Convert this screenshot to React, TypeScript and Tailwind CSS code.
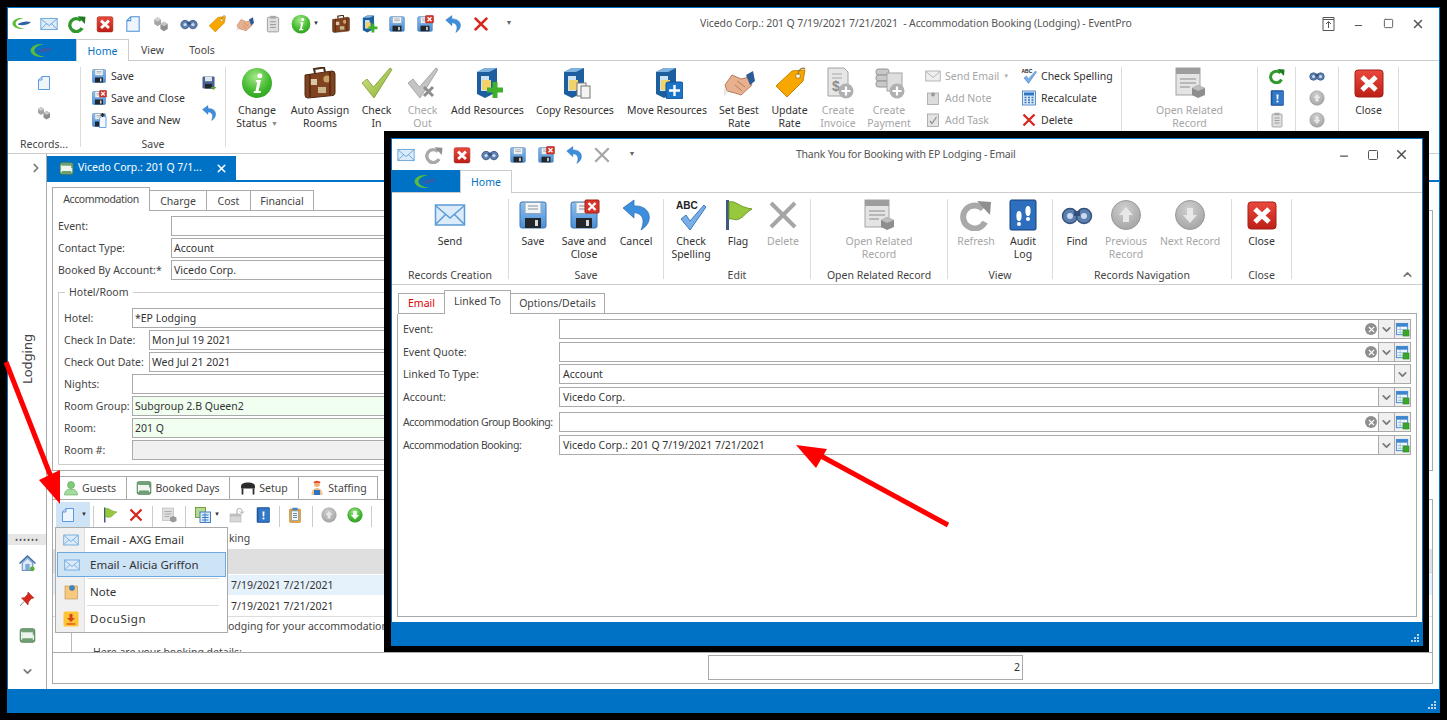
import type { ReactNode } from 'react'
import { ChevronRight, ChevronDown, ChevronUp, X, Minus, Square } from 'lucide-react'

// all icons are drawn on a 32 x 32 box
const saveBase = (
  <>
    <rect x="3" y="3" width="26" height="26" rx="2" fill="url(#blueV)" stroke="#3a75b8" />
    <rect x="8" y="3.5" width="16" height="11" fill="#f3f6f9" stroke="#8fa3b8" />
    <path d="M11 7h10M11 10h10" stroke="#8a8f96" strokeWidth="1.2" />
    <rect x="8" y="19" width="16" height="10" fill="#23272c" />
    <rect x="18" y="21" width="3" height="6" fill="#d9dde2" />
  </>
)

const cabinet = (
  <>
    <path d="M5 5 L13 1 H25 V25 L13 31 L5 27 Z" fill="#1d5f9e" />
    <path d="M5 5 L13 1 H25 L17 5 Z" fill="#7fb2de" />
    <path d="M9 9 H17 V24 H9 Z" fill="#cfe2f3" />
    <path d="M10 13 H19 V23 H10 Z" fill="#f2d26b" />
  </>
)

const icons: Record<string, ReactNode> = {
  mail: (
    <>
      <rect x="1.5" y="6" width="29" height="20" fill="#dcebfa" stroke="#5b9bd5" strokeWidth="1.5" />
      <path d="M2 7 L16 19 L30 7 M2 25 L12 15 M30 25 L20 15" fill="none" stroke="#5b9bd5" strokeWidth="1.5" />
    </>
  ),
  save: saveBase,
  saveClose: (
    <>
      {saveBase}
      <rect x="17" y="1" width="14" height="13" rx="1" fill="#d8352a" stroke="#a3211a" />
      <path d="M20.5 4 L27.5 11 M27.5 4 L20.5 11" stroke="#fff" strokeWidth="2.4" />
    </>
  ),
  saveNew: (
    <>
      {saveBase}
      <path d="M17 13 L21 9 H30 V31 H17 Z" fill="#f2f7fd" stroke="#4a90d9" strokeWidth="1.6" />
      <path d="M23 2 V10 M19 6 H27" stroke="#222" strokeWidth="2.6" />
    </>
  ),
  saveGreen: (
    <>
      <rect x="3" y="3" width="24" height="24" rx="2" fill="#46618f" />
      <rect x="8" y="3.5" width="14" height="9" fill="#dfe5ee" />
      <rect x="8" y="18" width="14" height="9" fill="#20262e" />
      <path d="M19 24 L31 24 L25 30 Z" fill="#5aa82e" />
    </>
  ),
  undo: (
    <path
      d="M3 9 L14 1 L14 7 C24 6 31 13 29 21 C28 26 24 29 21 31 C24 24 24 18 19 15 C17 14 15 13.5 14 14 L14 19 Z"
      fill="#3d8fde"
      stroke="#2569ad"
      strokeWidth="0.7"
    />
  ),
  x: <path d="M5 5 L27 27 M27 5 L5 27" stroke="#d8261c" strokeWidth="4.6" />,
  xGray: <path d="M4 4 L28 28 M28 4 L4 28" stroke="#a6a6a6" strokeWidth="4" />,
  refresh: (
    <>
      <path d="M23 10 A11.5 11.5 0 1 0 25 23" fill="none" stroke="#2f9a2b" strokeWidth="6" />
      <path d="M17 2 L31 3 L30 16 Z" fill="#1f7a22" />
    </>
  ),
  refreshGray: (
    <>
      <path d="M23 10 A11.5 11.5 0 1 0 25 23" fill="none" stroke="#a9a9a9" strokeWidth="6" />
      <path d="M17 2 L31 3 L30 16 Z" fill="#8f8f8f" />
    </>
  ),
  closeBox: (
    <>
      <rect x="2" y="3" width="28" height="27" rx="3" fill="url(#redV)" stroke="#a3211a" />
      <path d="M9 10 L23 23 M23 10 L9 23" stroke="#fff" strokeWidth="5" />
    </>
  ),
  page: <path d="M5 10 L12 3 H27 V29 H5 Z M12 3 V10 H5" fill="#eef5fc" stroke="#4a90d9" strokeWidth="1.8" />,
  cubes: (
    <>
      <path d="M4 8 L10 4 L16 8 V16 L10 20 L4 16 Z" fill="#a4a4a4" />
      <path d="M15 16 L21 12 L28 16 V25 L21 29 L15 25 Z" fill="#8e8e8e" />
      <path d="M15 16 L21 12 L28 16 L21 20 Z" fill="#c6c6c6" />
      <path d="M4 8 L10 4 L16 8 L10 12 Z" fill="#cfcfcf" />
    </>
  ),
  binoc: (
    <>
      <circle cx="9" cy="17" r="7.5" fill="#5c7fae" stroke="#34507a" strokeWidth="1.4" />
      <circle cx="23" cy="17" r="7.5" fill="#5c7fae" stroke="#34507a" strokeWidth="1.4" />
      <circle cx="9" cy="17" r="3" fill="#c9dcf2" />
      <circle cx="23" cy="17" r="3" fill="#c9dcf2" />
      <rect x="13" y="12" width="6" height="5" fill="#34507a" />
    </>
  ),
  tag: (
    <>
      <path d="M31 3 L29 14 L13 30 L2 19 L18 4 Z" fill="#f7a700" stroke="#c78300" />
      <circle cx="24" cy="9" r="2.4" fill="#fff" stroke="#b9800c" />
      <path d="M24 8 C24 2 29 0 31 2" fill="none" stroke="#9a7a2e" strokeWidth="1.2" />
    </>
  ),
  hands: (
    <>
      <path d="M2 18 L9 8 L18 12 L26 10 L29 18 L18 28 L12 26 L4 24 Z" fill="#e7b08e" stroke="#b97d5c" />
      <path d="M14 14 L22 20 M12 18 L19 24" stroke="#b97d5c" />
      <path d="M23 8 L30 4 L32 14 L27 18 Z" fill="#2c5c96" />
      <path d="M1 20 L5 25 L1 30 Z" fill="#e8e8e8" />
    </>
  ),
  clip: (
    <>
      <rect x="6" y="4" width="20" height="26" rx="2" fill="#dedede" stroke="#9a9a9a" strokeWidth="1.6" />
      <rect x="11" y="1.5" width="10" height="5" fill="#a8a8a8" />
      <path d="M11 12 H21 M11 17 H21 M11 22 H21" stroke="#8e8e8e" strokeWidth="1.6" />
    </>
  ),
  info: (
    <>
      <circle cx="16" cy="16" r="15" fill="url(#greenBall)" />
      <path d="M15 13 H20 L17.5 24 H20 L19.5 26 H12.5 L13 24 H14.5 L16.3 15 H14.6 Z" fill="#fff" />
      <circle cx="18.8" cy="8.8" r="2.5" fill="#fff" />
    </>
  ),
  suitcase: (
    <>
      <path d="M11 6 L10 2 L20 0.5 L21 5" fill="none" stroke="#4c2c17" strokeWidth="2" />
      <path d="M1 8 L28 4 Q31 4 31 7 L31 26 Q31 28 29 28.5 L4 31 Q1 31 1 28 Z" fill="#80421f" stroke="#4f2a14" />
      <rect x="6" y="12" width="7" height="6" fill="#d9c7a7" />
      <circle cx="23" cy="12" r="3.6" fill="#c8a165" />
      <rect x="14" y="20" width="8" height="6" fill="#cbb68f" />
      <path d="M6 7 V30 M26 5 V28" stroke="#53290f" strokeWidth="1.6" />
    </>
  ),
  cabinet,
  cabPlus: (
    <>
      {cabinet}
      <path d="M23 15 V31 M15 23 H31" stroke="#3fb02c" strokeWidth="5" />
    </>
  ),
  cabCopy: (
    <>
      {cabinet}
      <rect x="18" y="16" width="9" height="13" fill="#f4f4f4" stroke="#777" />
      <rect x="22" y="19" width="9" height="12" fill="#f4f4f4" stroke="#777" />
    </>
  ),
  cabMove: (
    <>
      {cabinet}
      <rect x="15" y="15" width="17" height="17" rx="2" fill="#1c74c8" stroke="#0f528f" />
      <path d="M23.5 18 V29 M18 23.5 H29" stroke="#fff" strokeWidth="2.4" />
    </>
  ),
  check: <path d="M1 16 L6 12 L12.5 20 L29 1 L31 2.5 L13 31 Z" fill="url(#greenCheck)" stroke="#7a9a2f" strokeWidth="0.8" />,
  checkGray: (
    <>
      <path d="M1 16 L6 12 L12.5 20 L29 1 L31 2.5 L13 31 Z" fill="#c4c4c4" stroke="#9a9a9a" strokeWidth="0.8" />
      <path d="M17 20 L26 29 M26 20 L17 29" stroke="#8e8e8e" strokeWidth="3" />
    </>
  ),
  checkBlue: (
    <>
      <path d="M6 20 L11 16 L15 22 L29 6 L31 8 L15 31 Z" fill="#79aee6" stroke="#3e7dc0" />
      <text x="1" y="10" fontSize="10" fontWeight="700" fill="#222" fontFamily="Liberation Sans, sans-serif">
        ABC
      </text>
    </>
  ),
  invoice: (
    <>
      <path d="M6 1 H22 L26 5 V29 H6 Z" fill="#e6e6e6" stroke="#a3a3a3" />
      <path d="M10 7 H20 M10 11 H20" stroke="#a9a9a9" />
      <text x="10" y="24" fontSize="14" fontWeight="700" fill="#8d8d8d" fontFamily="Liberation Sans, sans-serif">
        $
      </text>
      <circle cx="24" cy="24" r="7.5" fill="#b0b0b0" />
      <path d="M24 19.5 V28.5 M19.5 24 H28.5" stroke="#fff" strokeWidth="2.2" />
    </>
  ),
  payment: (
    <>
      <rect x="3" y="2" width="13" height="6" rx="2.5" fill="#c9c9c9" stroke="#949494" />
      <rect x="3" y="8" width="13" height="6" rx="2.5" fill="#c9c9c9" stroke="#949494" />
      <rect x="3" y="14" width="13" height="6" rx="2.5" fill="#c9c9c9" stroke="#949494" />
      <rect x="14" y="6" width="15" height="18" fill="#dedede" stroke="#a3a3a3" />
      <circle cx="24" cy="24" r="7.5" fill="#b0b0b0" />
      <path d="M24 19.5 V28.5 M19.5 24 H28.5" stroke="#fff" strokeWidth="2.2" />
    </>
  ),
  noteGray: (
    <>
      <rect x="5" y="6" width="22" height="23" fill="#dcdcdc" stroke="#a3a3a3" strokeWidth="1.6" />
      <circle cx="16" cy="9" r="4" fill="#9a9a9a" />
    </>
  ),
  taskGray: (
    <>
      <rect x="5" y="4" width="22" height="25" fill="#e3e3e3" stroke="#9e9e9e" strokeWidth="1.6" />
      <path d="M10 18 L14 23 L23 10" fill="none" stroke="#8e8e8e" strokeWidth="2.6" />
    </>
  ),
  mailGray: (
    <>
      <rect x="1.5" y="6" width="29" height="20" fill="#eeeeee" stroke="#a6a6a6" strokeWidth="1.6" />
      <path d="M2 7 L16 19 L30 7" fill="none" stroke="#a6a6a6" strokeWidth="1.6" />
    </>
  ),
  calc: (
    <>
      <rect x="3" y="2" width="26" height="28" fill="#dcebfa" stroke="#3a75b8" strokeWidth="1.6" />
      <rect x="6" y="5" width="20" height="6" fill="#2f74c0" />
      <path d="M7 15 h4 M14 15 h4 M21 15 h4 M7 20 h4 M14 20 h4 M21 20 h4 M7 25 h4 M14 25 h4 M21 25 h4" stroke="#3a75b8" strokeWidth="3" />
    </>
  ),
  record: (
    <>
      <rect x="2" y="1" width="24" height="27" fill="#e4e4e4" stroke="#a3a3a3" />
      <rect x="2" y="1" width="24" height="6" fill="#9d9d9d" />
      <path d="M6 12 H22 M6 16 H22 M6 20 H16" stroke="#a9a9a9" strokeWidth="1.5" />
      <path d="M18 21 L24 18 L31 21 V28 L24 31 L18 28 Z" fill="#8e8e8e" />
      <path d="M18 21 L24 18 L31 21 L24 24 Z" fill="#bdbdbd" />
    </>
  ),
  book: (
    <>
      <rect x="4" y="1" width="25" height="30" rx="1.5" fill="#1f5faa" stroke="#143f76" />
      <rect x="7" y="3" width="22" height="26" fill="#3478c8" />
      <path d="M15 9 H19 L18.5 19 H15.5 Z" fill="#fff" />
      <circle cx="17" cy="23" r="2.2" fill="#fff" />
    </>
  ),
  audit: (
    <>
      <rect x="3" y="1" width="26" height="30" rx="1.5" fill="#2d6fbe" stroke="#143f76" />
      <ellipse cx="21" cy="12" rx="2.6" ry="5" fill="#fff" />
      <circle cx="21" cy="20" r="2" fill="#fff" />
      <ellipse cx="12" cy="17" rx="2.6" ry="5" fill="#fff" />
      <circle cx="12" cy="25" r="2" fill="#fff" />
    </>
  ),
  flag: (
    <>
      <rect x="4" y="1" width="3" height="30" fill="#3f5a7d" />
      <path d="M7 3 C14 1 16 8 30 10 C24 13 22 18 17 20 C13 22 10 19 7 20 Z" fill="#97c73d" stroke="#6e9a22" />
    </>
  ),
  upGray: (
    <>
      <circle cx="16" cy="16" r="14.5" fill="url(#grayBall)" stroke="#9a9a9a" />
      <path d="M16 8 L23 16 H19 V23 H13 V16 H9 Z" fill="#e8e8e8" />
    </>
  ),
  downGray: (
    <>
      <circle cx="16" cy="16" r="14.5" fill="url(#grayBall)" stroke="#9a9a9a" />
      <path d="M16 24 L23 16 H19 V9 H13 V16 H9 Z" fill="#e8e8e8" />
    </>
  ),
  downGreen: (
    <>
      <circle cx="16" cy="16" r="14.5" fill="url(#greenBall)" stroke="#2a8a1f" />
      <path d="M16 25 L24 16 H19.5 V8 H12.5 V16 H8 Z" fill="#fff" />
    </>
  ),
  table: (
    <>
      <rect x="3" y="3" width="24" height="24" fill="#f0f6fc" stroke="#3d86cf" strokeWidth="2" />
      <rect x="3" y="3" width="24" height="7" fill="#3d86cf" />
      <path d="M3 16 H27 M3 22 H27 M11 10 V27" stroke="#93b8dc" strokeWidth="1.5" />
      <rect x="17" y="17" width="13" height="13" fill="#3aa52a" stroke="#2b7f1f" />
    </>
  ),
  grid: (
    <>
      <rect x="1" y="1" width="20" height="20" fill="#b7d88f" stroke="#5a8f2a" strokeWidth="1.6" />
      <rect x="10" y="10" width="21" height="21" fill="#dbe9f8" stroke="#2f74c0" strokeWidth="1.8" />
      <path d="M14 16 H27 M14 21 H27 M14 26 H27 M20 12 V30" stroke="#2f74c0" strokeWidth="1.8" />
    </>
  ),
  docGray: (
    <>
      <rect x="3" y="2" width="22" height="25" fill="#e0e0e0" stroke="#a3a3a3" />
      <path d="M7 9 H21 M7 14 H21 M7 19 H17" stroke="#9d9d9d" strokeWidth="1.6" />
      <path d="M18 21 L24 18 L31 21 V28 L24 31 L18 28 Z" fill="#9a9a9a" />
    </>
  ),
  lock: (
    <>
      <rect x="2" y="14" width="22" height="16" fill="#d8d8d8" stroke="#a8a8a8" />
      <rect x="2" y="14" width="22" height="5" fill="#bdbdbd" />
      <path d="M16 14 V6 C16 2 26 2 26 7 V12 M22 9 L26 13 L30 9" fill="none" stroke="#a8a8a8" strokeWidth="2" />
    </>
  ),
  clipOrange: (
    <>
      <rect x="5" y="4" width="22" height="27" rx="2" fill="#e8a33a" stroke="#b57412" />
      <rect x="9" y="8" width="14" height="19" fill="#f4f8fc" stroke="#3d86cf" />
      <rect x="11" y="1.5" width="10" height="5" fill="#3d86cf" />
      <path d="M12 13 H20 M12 17 H20 M12 21 H20" stroke="#3d6fa8" strokeWidth="1.6" />
    </>
  ),
  bed: (
    <>
      <rect x="2" y="3" width="28" height="26" rx="4" fill="#6f9f72" stroke="#3f7045" />
      <rect x="6" y="10" width="20" height="10" fill="#eef5ee" />
      <path d="M5 9 V24 M27 15 V24 M5 20 H27" stroke="#eef5ee" strokeWidth="2.4" />
    </>
  ),
  guest: (
    <>
      <circle cx="16" cy="10" r="7" fill="#7fcb7b" stroke="#4a9a46" />
      <path d="M3 30 C3 20 10 18 16 18 C22 18 29 20 29 30 Z" fill="#a4dca0" stroke="#4a9a46" />
    </>
  ),
  setup: (
    <>
      <path d="M2 13 C2 7 8 5 16 5 C24 5 30 7 30 13 V17 H2 Z" fill="#2b2b2b" />
      <path d="M5 17 V29 M27 17 V29" stroke="#2b2b2b" strokeWidth="3.5" />
    </>
  ),
  staff: (
    <>
      <circle cx="16" cy="8" r="6" fill="#f0b27a" />
      <path d="M9 6 C9 0 23 0 23 6 Z" fill="#e6502a" />
      <path d="M5 30 C5 20 10 16 16 16 C22 16 27 20 27 30 Z" fill="#f3c08c" />
      <path d="M10 20 H22 V30 H10 Z" fill="#2f74c0" />
    </>
  ),
  home: (
    <>
      <path d="M1 16 L16 2 L31 16" fill="none" stroke="#3d6fa8" strokeWidth="3" />
      <path d="M6 15 V29 H26 V15 L16 6 Z" fill="#dbe9f8" stroke="#3d6fa8" strokeWidth="1.6" />
      <rect x="12" y="17" width="8" height="12" fill="#7da7d6" />
      <circle cx="25" cy="26" r="4.5" fill="#58b03a" />
    </>
  ),
  pin: (
    <>
      <path d="M18 2 L30 14 L25 15 L19 22 L18 28 L5 14 L11 13 L17 7 Z" fill="#d8261c" stroke="#a3211a" />
      <path d="M10 21 L2 30" stroke="#888" strokeWidth="2" />
    </>
  ),
  noteYellow: (
    <>
      <rect x="4" y="4" width="25" height="26" fill="#f6c97d" stroke="#a88147" />
      <circle cx="18" cy="8" r="5" fill="#3d86cf" stroke="#2a5f96" />
    </>
  ),
  docusign: (
    <>
      <rect x="1" y="1" width="30" height="30" rx="3" fill="#ffc533" />
      <path d="M13 6 H19 V14 H24 L16 22 L8 14 H13 Z" fill="#d9401f" />
      <path d="M7 26 H25" stroke="#d9401f" strokeWidth="2.4" />
    </>
  ),
}

function Ic({ n, s = 16 }: { n: string; s?: number }) {
  return (
    <svg width={s} height={s} viewBox="0 0 32 32" className="shrink-0">
      {icons[n]}
    </svg>
  )
}

function Logo({ w = 38, h = 26 }: { w?: number; h?: number }) {
  return (
    <svg width={w} height={h} viewBox="0 0 38 26" className="shrink-0">
      <path d="M22 3 C10 1 1 7 1 13 C1 20 12 25 24 23 C14 22 7 18 7 13 C7 8 14 4 22 3 Z" fill="#5dbb3a" />
      <path d="M11 14 C18 9 28 8 36 10 C32 15 22 17 13 16 Z" fill="#2f5fa8" />
    </svg>
  )
}

// ribbon buttons
function Big({ w, n, t, off, caret, gap = 'mt-[5px]' }: { w: string; n: string; t: string[]; off?: boolean; caret?: boolean; gap?: string }) {
  return (
    <div className={`${w} shrink-0 flex flex-col items-center pt-[6px] ${off ? 'text-[#a6a6a6]' : 'text-[#333]'}`}>
      <div className="h-[32px]">
        <Ic n={n} s={32} />
      </div>
      <div className={`${gap} text-center leading-[13px] whitespace-nowrap`}>
        {t.map((line, i) => (
          <div key={line}>
            {line}
            {caret && i === 1 && <span className="ml-[4px] text-[7px] text-[#888] align-[1px]">▼</span>}
          </div>
        ))}
      </div>
    </div>
  )
}

function Small({ n, t, off, caret }: { n: string; t: string; off?: boolean; caret?: boolean }) {
  return (
    <div className={`h-[22px] flex items-center gap-[4px] whitespace-nowrap ${off ? 'text-[#a6a6a6]' : 'text-[#333]'}`}>
      <Ic n={n} />
      <span className="pt-px">{t}</span>
      {caret && <span className="text-[6px] text-[#aaa]">▼</span>}
    </div>
  )
}

function Sep({ h = 'h-[80px]' }: { h?: string }) {
  return <div className={`w-px ${h} mt-[6px] bg-[#dcdcdc] shrink-0`} />
}

function Group({ label, children, w, h = 'h-[76px]' }: { label: string; children: ReactNode; w?: string; h?: string }) {
  return (
    <div className={`flex flex-col shrink-0 ${w ?? ''}`}>
      <div className={`flex ${h}`}>{children}</div>
      <div className="text-center leading-[13px] text-[#444] whitespace-nowrap">{label}</div>
    </div>
  )
}

function Stack({ w, items }: { w: string; items: string[] }) {
  return (
    <div className={`${w} flex flex-col items-center gap-[6px] pt-[7px]`}>
      {items.map((n, i) => (
        <Ic key={i} n={n} />
      ))}
    </div>
  )
}

function Grip() {
  return (
    <svg width="10" height="10" viewBox="0 0 10 10" className="self-end mb-[3px] mr-[2px]">
      <path d="M7 1h2v2h-2zM4 4h2v2h-2zM7 4h2v2h-2zM1 7h2v2h-2zM4 7h2v2h-2zM7 7h2v2h-2z" fill="#b9d3ea" />
    </svg>
  )
}

function Qbtn({ n, w = 'w-[28px]' }: { n: string; w?: string }) {
  return (
    <div className={`${w} flex justify-center shrink-0`}>
      <Ic n={n} s={18} />
    </div>
  )
}

function Field({ v, bg = 'bg-white' }: { v?: string; bg?: string }) {
  return <div className={`flex-1 h-[20px] border border-[#aaa] ${bg} px-[2px] leading-[18px] whitespace-nowrap text-[#333]`}>{v}</div>
}

function FormRow({ label, lw, v, bg, cls = '' }: { label: string; lw: string; v?: string; bg?: string; cls?: string }) {
  return (
    <div className={`flex items-center ${cls}`}>
      <div className={`${lw} shrink-0 pt-px text-[#444] whitespace-nowrap`}>{label}</div>
      <Field v={v} bg={bg} />
    </div>
  )
}

function LinkRow({ label, v, clear, table = true, cls = '', labelCls = '' }: { label: string; v?: string; clear?: boolean; table?: boolean; cls?: string; labelCls?: string }) {
  return (
    <div className={`flex items-center ${cls}`}>
      <div className={`w-[156px] shrink-0 pt-px text-[#444] whitespace-nowrap ${labelCls}`}>{label}</div>
      <div className="flex-1 h-[20px] border border-[#aaa] flex items-stretch">
        <div className="flex-1 px-[3px] leading-[18px] text-[#333] whitespace-nowrap">{v}</div>
        {clear && (
          <div className="w-[14px] flex items-center justify-center">
            <div className="w-[12px] h-[12px] rounded-full bg-[#8f8f8f] flex items-center justify-center">
              <X size={9} strokeWidth={3} className="text-white" />
            </div>
          </div>
        )}
        <div className="w-[16px] border-l border-[#aaa] bg-[#f0f0f0] flex items-center justify-center">
          <ChevronDown size={13} strokeWidth={3} className="text-[#777]" />
        </div>
        {table && (
          <div className="w-[16px] border-l border-[#aaa] bg-[#f0f0f0] flex items-center justify-center">
            <Ic n="table" s={15} />
          </div>
        )}
      </div>
    </div>
  )
}

function LowTab({ w, n, t }: { w: string; n: string; t: string }) {
  return (
    <div className={`${w} h-[24px] shrink-0 border border-l-0 border-[#aaa] flex items-center justify-center gap-[3px] text-[#444] whitespace-nowrap`}>
      <Ic n={n} />
      <span className="pt-px">{t}</span>
    </div>
  )
}

function ToolSep({ cls = 'ml-[3px]' }: { cls?: string }) {
  return <div className={`w-px h-[21px] bg-[#ccc] mt-[4px] shrink-0 ${cls}`} />
}

function Tool({ n, cls = 'ml-0' }: { n: string; cls?: string }) {
  return (
    <div className={`w-[26px] h-[25px] flex items-center justify-center shrink-0 ${cls}`}>
      <Ic n={n} />
    </div>
  )
}

function MainWindow() {
  return (
    <div className="absolute left-[7px] top-[7px] w-[1433px] h-[706px] border-x border-t border-[#0072c6] bg-white flex flex-col">
      {/* quick access */}
      <div className="h-[31px] flex items-center shrink-0">
        <div className="w-[27px] flex justify-center">
          <Logo w={20} h={15} />
        </div>
        {['mail', 'refresh', 'closeBox', 'page', 'cubes', 'binoc', 'tag', 'hands', 'clip'].map((n) => (
          <Qbtn key={n} n={n} />
        ))}
        <div className="w-[40px] flex items-center pl-[4px]">
          <Ic n="info" s={20} />
          <span className="ml-[2px] text-[6px] text-[#333]">▼</span>
        </div>
        {['suitcase', 'cabPlus', 'save', 'saveClose', 'undo', 'x'].map((n) => (
          <Qbtn key={n} n={n} />
        ))}
        <div className="w-[28px] text-center text-[7px] text-[#666]">▼</div>
        <div className="ml-[177px] w-[434px] whitespace-nowrap text-[#555] tracking-[-0.1px]">Vicedo Corp.: 201 Q 7/19/2021 7/21/2021&nbsp; - Accommodation Booking (Lodging) - EventPro</div>
        <div className="ml-auto mr-[6px] flex items-center text-[#555]">
          <div className="w-[30px] flex justify-center">
            <svg width="13" height="14" viewBox="0 0 13 14">
              <path d="M1 .5h11v13H1zM1 2.5h11M6.5 11V5M4 7l2.5-2.5L9 7" fill="none" stroke="#555" />
            </svg>
          </div>
          <div className="w-[30px] flex justify-center pt-[3px]"><Minus size={11} strokeWidth={2.5} /></div>
          <div className="w-[30px] flex justify-center"><Square size={11} strokeWidth={2} /></div>
          <div className="w-[30px] flex justify-center"><X size={14} strokeWidth={2.5} /></div>
        </div>
      </div>
      {/* tabs */}
      <div className="h-[22px] flex shrink-0 border-b border-[#ccc] text-[#444]">
        <div className="w-[68px] h-[22px] bg-[#0072c6] flex items-center justify-center"><Logo w={24} h={17} /></div>
        <div className="w-[53px] h-[22px] border-x border-t border-[#ccc] bg-white text-center leading-[22px] text-[#0072c6]">Home</div>
        <div className="w-[47px] text-center leading-[23px]">View</div>
        <div className="w-[52px] text-center leading-[23px]">Tools</div>
      </div>
      {/* ribbon */}
      <div className="h-[93px] flex border-b border-[#ccc] shrink-0 text-[#333]">
        <Group label="Records..." w="w-[72px]" h="h-[77px]">
          <div className="w-[72px] flex flex-col items-center gap-[14px] pt-[14px]">
            <Ic n="page" />
            <Ic n="cubes" />
          </div>
        </Group>
        <Sep />
        <Group label="Save" w="w-[144px]" h="h-[77px]">
          <div className="w-[112px] pl-[10px] pt-[4px]">
            <Small n="save" t="Save" />
            <Small n="saveClose" t="Save and Close" />
            <Small n="saveNew" t="Save and New" />
          </div>
          <div className="w-[32px] flex flex-col items-center gap-[14px] pt-[14px]">
            <Ic n="saveGreen" />
            <Ic n="undo" />
          </div>
        </Group>
        <Sep />
        <Group label="" w="w-[895px]">
          <Big w="w-[62px]" n="info" t={['Change', 'Status']} caret />
          <Big w="w-[64px]" n="suitcase" t={['Auto Assign', 'Rooms']} />
          <Big w="w-[49px]" n="check" t={['Check', 'In']} />
          <Big w="w-[43px]" n="checkGray" t={['Check', 'Out']} off />
          <Big w="w-[87px]" n="cabPlus" t={['Add Resources']} />
          <Big w="w-[88px]" n="cabCopy" t={['Copy Resources']} />
          <Big w="w-[96px]" n="cabMove" t={['Move Resources']} />
          <Big w="w-[48px]" n="hands" t={['Set Best', 'Rate']} />
          <Big w="w-[53px]" n="tag" t={['Update', 'Rate']} />
          <Big w="w-[44px]" n="invoice" t={['Create', 'Invoice']} off />
          <Big w="w-[58px]" n="payment" t={['Create', 'Payment']} off />
          <div className="w-[96px] pl-[7px] pt-[4px]">
            <Small n="mailGray" t="Send Email" off caret />
            <Small n="noteGray" t="Add Note" off />
            <Small n="taskGray" t="Add Task" off />
          </div>
          <div className="w-[106px] pl-[7px] pt-[4px]">
            <Small n="checkBlue" t="Check Spelling" />
            <Small n="calc" t="Recalculate" />
            <Small n="x" t="Delete" />
          </div>
        </Group>
        <Sep />
        <Group label="" w="w-[135px]">
          <Big w="w-[135px]" n="record" t={['Open Related', 'Record']} off />
        </Group>
        <Sep />
        <Stack w="w-[37px]" items={['refresh', 'book', 'clip']} />
        <Sep />
        <Stack w="w-[42px]" items={['binoc', 'upGray', 'downGray']} />
        <Sep />
        <Group label="" w="w-[59px]">
          <Big w="w-[59px]" n="closeBox" t={['Close']} />
        </Group>
        <Sep />
      </div>
      {/* body */}
      <div className="flex-1 flex min-h-0">
        <div className="w-[39px] border-r border-[#aaa] flex flex-col items-center shrink-0 text-[#444]">
          <div className="h-[28px] w-full flex items-center justify-end pr-[3px]">
            <ChevronRight size={14} strokeWidth={3} className="text-[#777]" />
          </div>
          <div className="mt-[152px] [writing-mode:vertical-rl] rotate-180 text-[13px] leading-[16px]">Lodging</div>
          <div className="mt-auto w-full h-[11px] bg-[#e6e6e6] flex items-center justify-center text-[8px] leading-none tracking-[1px] text-[#555]">••••••</div>
          <div className="h-[36px] flex items-center"><Ic n="home" s={17} /></div>
          <div className="h-[36px] flex items-center"><Ic n="pin" s={16} /></div>
          <div className="h-[36px] flex items-center"><Ic n="bed" s={17} /></div>
          <div className="h-[36px] flex items-center"><ChevronDown size={13} strokeWidth={3} className="text-[#777]" /></div>
        </div>
        <div className="flex-1 min-w-0 flex flex-col">
          <div className="h-[28px] pt-[2px] border-b-2 border-[#0072c6] flex shrink-0">
            <div className="w-[189px] h-[24px] bg-[#0072c6] text-white flex items-center pl-[12px] whitespace-nowrap">
              <Ic n="bed" s={15} />
              <span className="ml-[4px]">Vicedo Corp.: 201 Q 7/1...</span>
              <X size={13} strokeWidth={3} className="ml-auto mr-[8px]" />
            </div>
          </div>
          <div className="flex-1 min-h-0 pl-[5px] pr-[6px] pb-[5px] flex flex-col">
            {/* upper form */}
            <div className="mt-[5px] flex h-[24px] shrink-0 items-end text-[#444]">
              <div className="w-[98px] h-[24px] border-x border-t border-[#aaa] bg-white text-center leading-[22px] tracking-[-0.4px]">Accommodation</div>
              <div className="w-[57px] h-[21px] border-t border-r border-b border-[#aaa] text-center leading-[20px]">Charge</div>
              <div className="w-[44px] h-[21px] border-t border-r border-b border-[#aaa] text-center leading-[20px]">Cost</div>
              <div className="w-[63px] h-[21px] border-t border-r border-b border-[#aaa] text-center leading-[20px]">Financial</div>
              <div className="flex-1 border-b border-[#aaa]" />
            </div>
            <div className="border-x border-b border-[#aaa] pl-[5px] pr-[5px] pt-[5px] pb-[5px] shrink-0">
              <FormRow label="Event:" lw="w-[113px]" />
              <FormRow label="Contact Type:" lw="w-[113px]" v="Account" cls="mt-[2px]" />
              <FormRow label="Booked By Account:*" lw="w-[113px]" v="Vicedo Corp." cls="mt-[2px]" />
              <fieldset className="mt-[6px] border border-[#ccc] px-[5px] pb-[4px]">
                <legend className="ml-[1px] px-[4px] leading-[13px] text-[#444]">Hotel/Room</legend>
                <FormRow label="Hotel:" lw="w-[68px]" v="*EP Lodging" cls="mt-[9px]" />
                <FormRow label="Check In Date:" lw="w-[85px]" v="Mon Jul 19 2021" cls="mt-[2px]" />
                <FormRow label="Check Out Date:" lw="w-[85px]" v="Wed Jul 21 2021" cls="mt-[2px]" />
                <FormRow label="Nights:" lw="w-[68px]" cls="mt-[2px]" />
                <FormRow label="Room Group:" lw="w-[68px]" v="Subgroup 2.B Queen2" bg="bg-[#f0fff0]" cls="mt-[2px]" />
                <FormRow label="Room:" lw="w-[68px]" v="201 Q" bg="bg-[#f0fff0]" cls="mt-[2px]" />
                <FormRow label="Room #:" lw="w-[68px]" bg="bg-[#f0f0f0]" cls="mt-[2px]" />
              </fieldset>
            </div>
            {/* lower tabs + grid */}
            <div className="mt-[5px] flex h-[24px] shrink-0 border-l border-[#aaa]">
              <LowTab w="w-[74px]" n="guest" t="Guests" />
              <LowTab w="w-[103px]" n="bed" t="Booked Days" />
              <LowTab w="w-[69px]" n="setup" t="Setup" />
              <LowTab w="w-[79px]" n="staff" t="Staffing" />
              <div className="flex-1 border-b border-[#aaa]" />
            </div>
            <div className="flex-1 min-h-0 border-x border-b border-[#aaa] flex flex-col">
              <div className="h-[27px] shrink-0 flex pl-[3px] pt-[2px]">
                <div className="w-[34px] h-[25px] bg-[#cfe5f7] flex items-center pl-[4px] shrink-0">
                  <Ic n="page" />
                  <span className="ml-[5px] text-[6px] text-[#333]">▼</span>
                </div>
                <ToolSep />
                <Tool n="flag" cls="ml-[3px]" />
                <Tool n="x" />
                <ToolSep />
                <Tool n="docGray" cls="ml-[3px]" />
                <ToolSep />
                <div className="ml-[3px] w-[35px] h-[25px] flex items-center pl-[6px] shrink-0">
                  <Ic n="grid" />
                  <span className="ml-[3px] text-[6px] text-[#333]">▼</span>
                </div>
                <Tool n="lock" />
                <Tool n="book" />
                <ToolSep />
                <Tool n="clipOrange" cls="ml-[2px]" />
                <ToolSep cls="ml-[4px]" />
                <Tool n="upGray" cls="ml-[3px]" />
                <Tool n="downGreen" />
                <ToolSep />
              </div>
              <div className="h-[22px] shrink-0 pl-[176px] leading-[22px] text-[#444] whitespace-nowrap">king</div>
              <div className="h-[25px] shrink-0 bg-[#dfdfdf]" />
              <div className="h-[22px] shrink-0 bg-[#e5f1fb] border-y border-white pl-[178px] leading-[20px] text-[#333]">7/19/2021 7/21/2021</div>
              <div className="h-[21px] shrink-0 border-b border-[#ddd] pl-[178px] leading-[20px] text-[#333]">7/19/2021 7/21/2021</div>
              <div className="flex-1 min-h-0 overflow-hidden ml-[18px] border-l border-[#bbb] pt-[2px] text-[#444] whitespace-nowrap">
                <div className="pl-[156px] leading-[14px]">odging for your accommodation needs.</div>
                <div className="pl-[21px] mt-[12px] leading-[14px]">Here are your booking details:</div>
              </div>
              <div className="h-[31px] shrink-0 border-t border-[#aaa] pl-[655px] pt-[2px]">
                <div className="w-[315px] h-[25px] border border-[#aaa] text-right pr-[2px] leading-[23px] text-[#333]">2</div>
              </div>
            </div>
          </div>
        </div>
      </div>
      <div className="h-[24px] bg-[#0072c6] shrink-0 flex justify-end">
        <Grip />
      </div>
    </div>
  )
}

function EmailWindow() {
  return (
    <div className="absolute left-[384px] top-[131px] w-[1045px] h-[521px] border-l-[7px] border-t-[7px] border-r-[6px] border-b-[6px] border-black bg-white">
      <div className="h-full border-x border-t border-[#0072c6] flex flex-col">
        <div className="h-[31px] flex items-center shrink-0">
          {['mail', 'refreshGray', 'closeBox', 'binoc', 'save', 'saveClose', 'undo', 'xGray'].map((n) => (
            <Qbtn key={n} n={n} />
          ))}
          <div className="w-[28px] ml-[2px] text-center text-[7px] text-[#666]">▼</div>
          <div className="ml-[150px] w-[220px] whitespace-nowrap text-[#555] tracking-[-0.23px]">Thank You for Booking with EP Lodging - Email</div>
          <div className="ml-auto mr-[6px] flex items-center text-[#555]">
            <div className="w-[29px] flex justify-center pt-[3px]"><Minus size={12} strokeWidth={2.5} /></div>
            <div className="w-[29px] flex justify-center"><Square size={12} strokeWidth={2} /></div>
            <div className="w-[29px] flex justify-center"><X size={15} strokeWidth={2.5} /></div>
          </div>
        </div>
        <div className="h-[23px] flex shrink-0 border-b border-[#ccc]">
          <div className="w-[68px] h-[22px] bg-[#0072c6] flex items-center justify-center"><Logo w={24} h={17} /></div>
          <div className="w-[52px] h-[23px] border-x border-t border-[#ccc] bg-white text-center leading-[22px] text-[#0072c6]">Home</div>
        </div>
        <div className="h-[92px] flex border-b border-[#ccc] shrink-0">
          <Group label="Records Creation" w="w-[116px]">
            <Big w="w-[116px]" gap="mt-[4px]" n="mail" t={['Send']} />
          </Group>
          <Sep />
          <Group label="Save" w="w-[154px]">
            <Big w="w-[48px]" gap="mt-[4px]" n="save" t={['Save']} />
            <Big w="w-[54px]" gap="mt-[4px]" n="saveClose" t={['Save and', 'Close']} />
            <Big w="w-[50px]" gap="mt-[4px]" n="undo" t={['Cancel']} />
          </Group>
          <Sep />
          <Group label="Edit" w="w-[146px]">
            <Big w="w-[54px]" gap="mt-[4px]" n="checkBlue" t={['Check', 'Spelling']} />
            <Big w="w-[40px]" gap="mt-[4px]" n="flag" t={['Flag']} />
            <Big w="w-[50px]" gap="mt-[4px]" n="xGray" t={['Delete']} off />
          </Group>
          <Sep />
          <Group label="Open Related Record" w="w-[136px]">
            <Big w="w-[136px]" gap="mt-[4px]" n="record" t={['Open Related', 'Record']} off />
          </Group>
          <Sep />
          <Group label="View" w="w-[104px]">
            <Big w="w-[56px]" gap="mt-[4px]" n="refreshGray" t={['Refresh']} off />
            <Big w="w-[38px]" gap="mt-[4px]" n="audit" t={['Audit', 'Log']} />
          </Group>
          <Sep />
          <Group label="Records Navigation" w="w-[178px]">
            <Big w="w-[48px]" gap="mt-[4px]" n="binoc" t={['Find']} />
            <Big w="w-[50px]" gap="mt-[4px]" n="upGray" t={['Previous', 'Record']} off />
            <Big w="w-[78px]" gap="mt-[4px]" n="downGray" t={['Next Record']} off />
          </Group>
          <Sep />
          <Group label="Close" w="w-[59px]">
            <Big w="w-[59px]" gap="mt-[4px]" n="closeBox" t={['Close']} />
          </Group>
          <Sep />
          <ChevronUp size={13} strokeWidth={3} className="ml-auto mr-[8px] self-end mb-[3px] text-[#777]" />
        </div>
        <div className="flex-1 min-h-0 pl-[5px] pr-[5px] pb-[5px] pt-[5px] flex flex-col">
          <div className="flex items-end h-[24px] shrink-0 text-[#444]">
            <div className="w-[46px] h-[21px] border-l border-t border-b border-[#aaa] text-center leading-[19px] text-[#e00000] ml-[1px]">Email</div>
            <div className="w-[67px] h-[24px] border-x border-t border-[#aaa] bg-white text-center leading-[21px]">Linked To</div>
            <div className="w-[94px] h-[21px] border-t border-r border-b border-[#aaa] text-center leading-[19px]">Options/Details</div>
            <div className="flex-1 border-b border-[#aaa]" />
          </div>
          <div className="flex-1 border-x border-b border-[#aaa] pl-[5px] pr-[5px] pt-[5px]">
            <LinkRow label="Event:" clear />
            <LinkRow label="Event Quote:" clear cls="mt-[3px]" />
            <LinkRow label="Linked To Type:" v="Account" table={false} cls="mt-[2px]" />
            <LinkRow label="Account:" v="Vicedo Corp." cls="mt-[3px]" />
            <LinkRow label="Accommodation Group Booking:" labelCls="tracking-[-0.4px]" clear cls="mt-[5px]" />
            <LinkRow label="Accommodation Booking:" labelCls="tracking-[-0.4px]" v="Vicedo Corp.: 201 Q 7/19/2021 7/21/2021" cls="mt-[3px]" />
          </div>
        </div>
        <div className="h-[24px] bg-[#0072c6] shrink-0 flex justify-end">
          <Grip />
        </div>
      </div>
    </div>
  )
}

function AddMenu() {
  return (
    <div className="absolute left-[55px] top-[527px] w-[173px] h-[106px] border border-[#aaa] bg-white text-[#333] text-[11.5px] whitespace-nowrap">
      <div className="absolute left-0 top-0 bottom-0 w-[29px] bg-[#f0f0f0] border-r border-[#ddd]" />
      <div className="relative flex items-center h-[24px]">
        <div className="w-[29px] flex justify-center"><Ic n="mail" /></div>
        <span className="ml-[5px]">Email - AXG Email</span>
      </div>
      <div className="relative flex items-center h-[25px] ml-px mr-px bg-[#cde4f7] border border-[#6fa8dc]">
        <div className="w-[27px] flex justify-center"><Ic n="mail" /></div>
        <span className="ml-[5px]">Email - Alicia Griffon</span>
      </div>
      <div className="relative ml-[31px] mr-[8px] h-px mt-px bg-[#ddd]" />
      <div className="relative flex items-center h-[26px]">
        <div className="w-[29px] flex justify-center"><Ic n="noteYellow" /></div>
        <span className="ml-[5px]">Note</span>
      </div>
      <div className="relative ml-[31px] mr-[8px] h-px bg-[#ddd]" />
      <div className="relative flex items-center h-[26px]">
        <div className="w-[29px] flex justify-center"><Ic n="docusign" /></div>
        <span className="ml-[5px] tracking-[0.6px]">DocuSign</span>
      </div>
    </div>
  )
}

export default function App() {
  return (
    <div className="relative w-[1447px] h-[720px] bg-black overflow-hidden font-['Noto_Sans',sans-serif] text-[10.5px]">
      <svg className="absolute w-0 h-0">
        <defs>
          <linearGradient id="blueV" x1="0" y1="0" x2="0" y2="1">
            <stop offset="0" stopColor="#8cc0f0" />
            <stop offset="1" stopColor="#4a8ed6" />
          </linearGradient>
          <linearGradient id="redV" x1="0" y1="0" x2="0" y2="1">
            <stop offset="0" stopColor="#ea4a3c" />
            <stop offset="1" stopColor="#bd1f16" />
          </linearGradient>
          <linearGradient id="greenCheck" x1="0" y1="0" x2="1" y2="1">
            <stop offset="0" stopColor="#d6e88e" />
            <stop offset="1" stopColor="#86ad2c" />
          </linearGradient>
          <radialGradient id="greenBall" cx="0.45" cy="0.3" r="0.8">
            <stop offset="0" stopColor="#a5e88a" />
            <stop offset="0.6" stopColor="#42b92e" />
            <stop offset="1" stopColor="#2a9a22" />
          </radialGradient>
          <radialGradient id="grayBall" cx="0.45" cy="0.3" r="0.8">
            <stop offset="0" stopColor="#cfcfcf" />
            <stop offset="1" stopColor="#a0a0a0" />
          </radialGradient>
        </defs>
      </svg>
      <MainWindow />
      <AddMenu />
      <EmailWindow />
      {/* red callout arrows drawn on top of the screenshot */}
      <svg className="absolute left-0 top-0 pointer-events-none" width="1447" height="720" viewBox="0 0 1447 720">
        <path d="M6 362 L53 482" stroke="#ff0000" strokeWidth="5" />
        <path d="M39 480 L60 504 L60 470 Z" fill="#ff0000" />
        <path d="M948 525 L821 456" stroke="#ff0000" strokeWidth="5" />
        <path d="M796 445 L827 449 L816 468 Z" fill="#ff0000" />
      </svg>
    </div>
  )
}
